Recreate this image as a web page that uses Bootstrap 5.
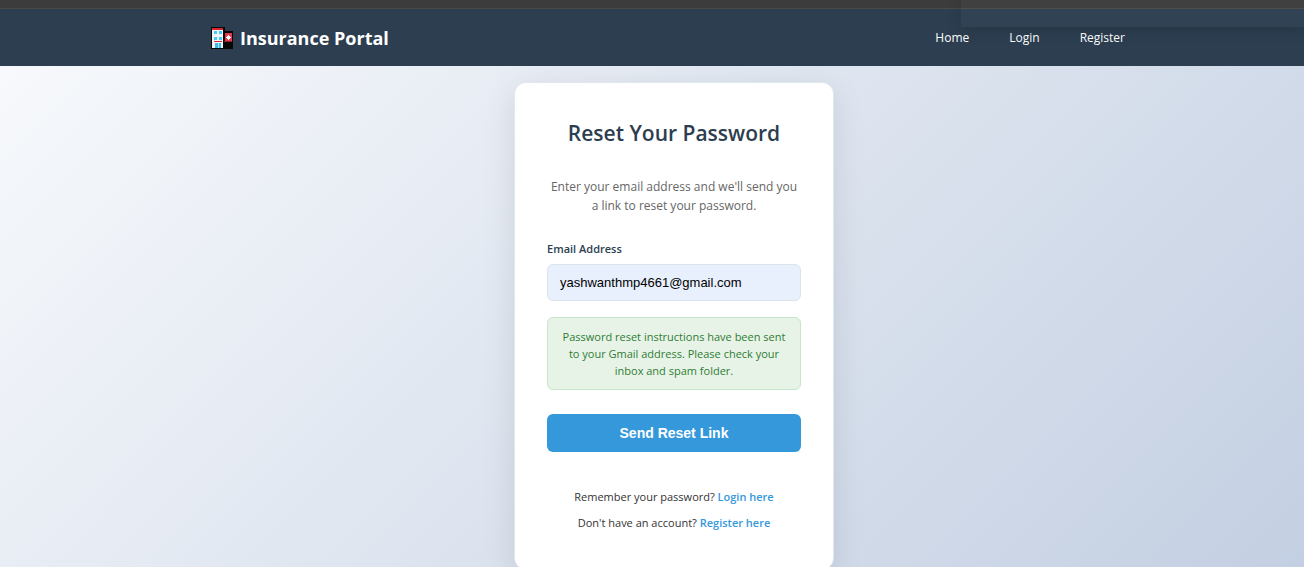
<!DOCTYPE html>
<html lang="en">
<head>
<meta charset="utf-8">
<meta name="viewport" content="width=device-width, initial-scale=1">
<title>Insurance Portal - Reset Password</title>
<link href="https://cdn.jsdelivr.net/npm/bootstrap@5.3.0/dist/css/bootstrap.min.css" rel="stylesheet">
<style>
  body {
    font-family: "Segoe UI", "Open Sans", "Noto Sans", sans-serif;
    font-size: 11px;
    line-height: 18px;
    color: #333;
  }
  .window-edge { height: 9px; background: #3c3c3c; border-bottom: 1px solid #4a4a48; }
  .site-nav { height: 57px; background: #2c3e50; padding-left: 44px; }
  .nav-inner { max-width: 926px; }
  .brand-link { font-size: 18px; line-height: 28px; font-weight: 700; gap: 7px; }
  .menu-link { font-size: 12px; line-height: 20px; }
  .menu { gap: 40px; padding-right: 12px; }
  .popup-edge {
    top: 0; right: 0; width: 343px; height: 27px;
    background: rgba(255, 255, 255, .025);
    box-shadow: 0 2px 16px rgba(0, 0, 0, .16);
  }
  .page-body {
    padding: 16px 0 0 44px;
    background: linear-gradient(135deg, #f7f9fc 0%, #c3cfe2 100%);
  }
  .reset-card {
    width: 320px; padding: 32px 32px 37px;
    border: 1px solid #e1e8ed; border-radius: 12px;
    box-shadow: 0 8px 32px rgba(0, 0, 0, .1);
  }
  .reset-title { font-size: 21px; line-height: 36px; font-weight: 600; color: #2c3e50; margin-bottom: 26px; }
  .intro { font-size: 12px; line-height: 19px; color: #666; margin-bottom: 25px; }
  .field-label { font-weight: 600; color: #2c3e50; margin-bottom: 6px; }
  .field-box, .field-box:focus {
    height: 37px; padding: 0 12px; font: 13px/20px "Liberation Sans", Arial, sans-serif;
    color: #000; background: #e8f0fe; border: 1px solid #dce4ec; border-radius: 6px;
  }
  .sent-note {
    margin: 16px 0 24px; padding: 10px 12px; line-height: 17px; color: #2e7d32;
    background: #e8f3e8; border: 1px solid #c8e6c9; border-radius: 6px;
  }
  .send-btn, .send-btn:hover {
    height: 38px; font: 700 14px/20px "Liberation Sans", Arial, sans-serif;
    color: #fff; background: #3498db; border: 0; border-radius: 6px; padding: 0;
  }
  .card-links { margin-top: 36px; gap: 8px; }
  .card-links a { color: #3498db; font-weight: 600; }
</style>
</head>
<body class="vh-100 overflow-hidden d-flex flex-column">
<div class="window-edge flex-shrink-0"></div>
<nav class="site-nav flex-shrink-0">
  <div class="nav-inner mx-auto h-100 d-flex align-items-center justify-content-between">
    <a href="#" class="brand-link d-flex align-items-center text-white text-decoration-none">
      <svg width="22" height="22" viewBox="0 0 22 22" aria-hidden="true">
        <path d="M0 0h14v4h8v18H0z" fill="#080808"/>
        <path d="M1 3h11v18H1z" fill="#f4f4f6"/>
        <path d="M1 1h11v2H1z" fill="#d82536"/>
        <path d="M3 4h3v3H3zM8 4h3v3H8zM3 10h3v3H3zM8 10h3v3H8z" fill="#45cdf1"/>
        <path d="M3 14h8v1H3z" fill="#d82536"/>
        <path d="M4 16h6v5H4z" fill="#3bbce8"/><path d="M7 16h1v5H7z" fill="#a9e9fa"/>
        <path d="M14 6h7v8h-7z" fill="#e23b4d"/>
        <path d="M17 8h1v1h1v1h1v1h-1v1h-1v1h-1v-1h-1v-1h-1v-1h1V9h1z" fill="#fff"/>
        <path d="M13 14h8v1h-8z" fill="#98202c"/>
      </svg>
      <span>Insurance Portal</span>
    </a>
    <div class="menu d-flex">
      <a href="#" class="menu-link text-white text-decoration-none">Home</a>
      <a href="#" class="menu-link text-white text-decoration-none">Login</a>
      <a href="#" class="menu-link text-white text-decoration-none">Register</a>
    </div>
  </div>
</nav>
<div class="popup-edge position-absolute pe-none"></div>
<main class="page-body flex-grow-1 d-flex justify-content-center align-items-start">
  <form class="reset-card bg-white">
    <h1 class="reset-title text-center">Reset Your Password</h1>
    <p class="intro text-center">Enter your email address and we'll send you a link to reset your password.</p>
    <label for="email" class="field-label d-block">Email Address</label>
    <input id="email" type="email" class="field-box form-control" value="yashwanthmp4661@gmail.com">
    <div class="sent-note text-center" role="status">Password reset instructions have been sent to your Gmail address. Please check your inbox and spam folder.</div>
    <button type="button" class="send-btn btn w-100">Send Reset Link</button>
    <div class="card-links d-flex flex-column text-center">
      <div>Remember your password? <a href="#" class="text-decoration-none">Login here</a></div>
      <div>Don't have an account? <a href="#" class="text-decoration-none">Register here</a></div>
    </div>
  </form>
</main>
<script src="https://cdn.jsdelivr.net/npm/bootstrap@5.3.0/dist/js/bootstrap.bundle.min.js"></script>
</body>
</html>
